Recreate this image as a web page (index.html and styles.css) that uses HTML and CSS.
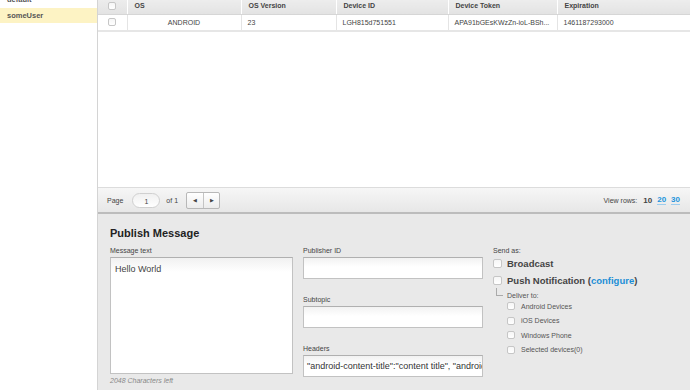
FILE: index.html
```html
<!DOCTYPE html>
<html lang="en">
<head>
    <meta charset="UTF-8">
    <title>Devices - Publish</title>
    <link rel="stylesheet" href="styles.css">
</head>
<body>
    <div class="app">
        <aside class="sidebar">
            <ul class="user-list">
                <li>default</li>
                <li class="selected">someUser</li>
            </ul>
        </aside>

        <main class="main">
            <table class="device-table">
                <thead>
                    <tr>
                        <th class="col-check"><span class="cb"></span></th>
                        <th class="col-os">OS</th>
                        <th class="col-ver">OS Version</th>
                        <th class="col-id">Device ID</th>
                        <th class="col-token">Device Token</th>
                        <th>Expiration</th>
                    </tr>
                </thead>
                <tbody>
                    <tr>
                        <td class="col-check"><span class="cb"></span></td>
                        <td class="center">ANDROID</td>
                        <td>23</td>
                        <td>LGH815d751551</td>
                        <td>APA91bGEsKWzZn-ioL-BSh...</td>
                        <td>1461187293000</td>
                    </tr>
                </tbody>
            </table>

            <div class="table-space"></div>

            <div class="pager">
                <div class="pager-left">
                    <span>Page</span>
                    <span class="page-input">1</span>
                    <span>of 1</span>
                    <span class="pager-btns">
                        <span class="pager-btn">&#9664;</span>
                        <span class="pager-btn">&#9654;</span>
                    </span>
                </div>
                <div class="pager-right">
                    <span>View rows:</span>
                    <b>10</b>
                    <a href="#">20</a>
                    <a href="#">30</a>
                </div>
            </div>

            <section class="publish">
                <h2>Publish Message</h2>
                <div class="publish-grid">
                    <div class="field-col">
                        <label>Message text</label>
                        <div class="text-box textarea">Hello World</div>
                        <div class="chars-left">2048 Characters left</div>
                    </div>

                    <div class="field-col">
                        <label>Publisher ID</label>
                        <div class="text-box"></div>
                        <label>Subtopic</label>
                        <div class="text-box"></div>
                        <label>Headers</label>
                        <div class="text-box filled">"android-content-title":"content title", "android-content-text":"content text"</div>
                    </div>

                    <div class="send-col">
                        <label>Send as:</label>
                        <div class="send-opt first"><span class="cb big"></span>Broadcast</div>
                        <div class="send-opt"><span class="cb big"></span>Push Notification (<a href="#">configure</a>)</div>
                        <div class="deliver">
                            <span class="tree-line"></span>Deliver to:
                        </div>
                        <ul class="targets">
                            <li><span class="cb"></span>Android Devices</li>
                            <li><span class="cb"></span>iOS Devices</li>
                            <li><span class="cb"></span>Windows Phone</li>
                            <li><span class="cb"></span>Selected devices(0)</li>
                        </ul>
                    </div>
                </div>
            </section>
        </main>
    </div>
</body>
</html>
```

FILE: styles.css
```css
* {
    margin: 0;
    padding: 0;
    box-sizing: border-box;
}

body {
    font-family: "Liberation Sans", Arial, Helvetica, sans-serif;
    color: #444;
    background: #fff;
    overflow: hidden;
}

.app {
    display: flex;
    height: 390px;
}

/* sidebar */

.sidebar {
    width: 98px;
    border-right: 1px solid #d4d4d4;
    background: #fff;
    flex-shrink: 0;
}

.user-list {
    list-style: none;
    margin-top: -8px;
}

.user-list li {
    height: 15px;
    line-height: 15px;
    padding-left: 7px;
    font-size: 7.5px;
    font-weight: bold;
    color: #555;
}

.user-list li.selected {
    height: 15px;
    margin-top: 1px;
    background: #fdf3c4;
}

/* main */

.main {
    flex: 1;
    display: flex;
    flex-direction: column;
    min-width: 0;
}

.device-table {
    flex: none;
    width: 100%;
    border-collapse: collapse;
    table-layout: fixed;
    font-size: 7px;
    margin-top: -8px;
}

.device-table th {
    height: 22px;
    padding: 6px 0 0 7px;
    text-align: left;
    font-weight: bold;
    color: #444;
    background: linear-gradient(#f2f2f2, #e3e3e3);
    border-left: 1px solid #fff;
    border-bottom: 1px solid #d6d6d6;
}

.device-table td {
    height: 17px;
    padding: 1px 0 0 6px;
    color: #444;
    border-left: 1px solid #e4e4e4;
    border-bottom: 2px solid #e6e6e6;
    white-space: nowrap;
    overflow: hidden;
}

.device-table .col-check {
    width: 29px;
    padding: 0;
    text-align: center;
    border-left: none;
}

.device-table th.col-check {
    padding-top: 6px;
}

.col-os { width: 114px; }
.col-ver { width: 95px; }
.col-id { width: 112px; }
.col-token { width: 109px; }

.device-table td.center {
    text-align: center;
    padding-left: 0;
}

.cb {
    display: inline-block;
    flex: none;
    width: 8px;
    height: 8px;
    border: 1px solid #c6c6c6;
    border-radius: 2px;
    background: linear-gradient(#f6f6f6, #fff);
    vertical-align: middle;
}

.table-space {
    flex: 1;
}

/* pager */

.pager {
    flex: none;
    height: 27px;
    display: flex;
    align-items: center;
    justify-content: space-between;
    padding: 0 10px 0 9px;
    font-size: 7px;
    color: #444;
    background: linear-gradient(#f6f6f6, #e7e7e7);
    border-top: 1px solid #dcdcdc;
    border-bottom: 2px solid #bcbcbc;
}

.pager-left {
    display: flex;
    align-items: center;
}

.page-input {
    width: 28px;
    height: 15px;
    margin: 0 6px 0 9px;
    line-height: 15px;
    text-align: center;
    background: linear-gradient(#f0f0f0, #fff);
    border: 1px solid #d0d0d0;
    border-radius: 8px;
}

.pager-btns {
    display: flex;
    margin-left: 8px;
    border: 1px solid #b8b8b8;
    border-radius: 2px;
    background: linear-gradient(#fff, #ececec);
}

.pager-btn {
    width: 16px;
    height: 15px;
    line-height: 15px;
    text-align: center;
    font-size: 5px;
    color: #444;
}

.pager-btn + .pager-btn {
    border-left: 1px solid #c4c4c4;
}

.pager-right {
    display: flex;
    align-items: center;
    gap: 5px;
}

.pager-right b {
    margin-left: 1px;
    font-size: 8px;
}

.pager-right a {
    font-size: 8px;
    font-weight: bold;
    color: #2394dc;
    text-decoration: none;
    border-bottom: 1px solid #9dcdee;
}

/* publish */

.publish {
    flex: none;
    height: 176px;
    background: #e9e9e9;
    padding: 13px 0 0 12px;
}

.publish h2 {
    font-size: 11px;
    font-weight: bold;
    color: #222;
    margin-bottom: 8px;
}

.publish-grid {
    display: grid;
    grid-template-columns: 183px 180px 1fr;
    column-gap: 10px;
}

.publish label {
    display: block;
    font-size: 7px;
    color: #444;
    height: 10px;
}

.field-col {
    display: flex;
    flex-direction: column;
}

.text-box {
    height: 22px;
    margin-bottom: 17px;
    border: 1px solid #c2c2c2;
    border-top-color: #b0b0b0;
    background: linear-gradient(#f2f2f2, #fff 45%);
    font-size: 9px;
    color: #444;
    padding: 5px 4px 0;
    white-space: nowrap;
    overflow: hidden;
}

.text-box.textarea {
    height: 117px;
    margin-bottom: 3px;
    background: linear-gradient(#f1f1f1, #fff 14px);
    padding-top: 6px;
}

.text-box.filled {
    color: #333;
    padding-left: 3px;
}

.chars-left {
    font-size: 7px;
    font-style: italic;
    color: #888;
}

.send-col {
    display: flex;
    flex-direction: column;
}

.send-opt {
    display: flex;
    align-items: center;
    font-size: 9.5px;
    font-weight: bold;
    color: #444;
    height: 17px;
}

.send-opt.first {
    margin-top: -2px;
}

.send-opt .cb {
    margin-right: 5px;
}

.cb.big {
    width: 9px;
    height: 9px;
}

.send-opt a {
    color: #1b8ed6;
    text-decoration: none;
}

.deliver {
    position: relative;
    font-size: 7px;
    color: #555;
    padding-left: 14px;
    height: 10px;
    padding-top: 3px;
}

.tree-line {
    position: absolute;
    left: 3px;
    top: -1px;
    width: 7px;
    height: 8px;
    border-left: 1px solid #aaa;
    border-bottom: 1px solid #aaa;
}

.targets {
    list-style: none;
    padding-left: 14px;
}

.targets li {
    display: flex;
    align-items: center;
    height: 14.5px;
    font-size: 7px;
    color: #555;
}

.targets .cb {
    margin-right: 6px;
}
```
